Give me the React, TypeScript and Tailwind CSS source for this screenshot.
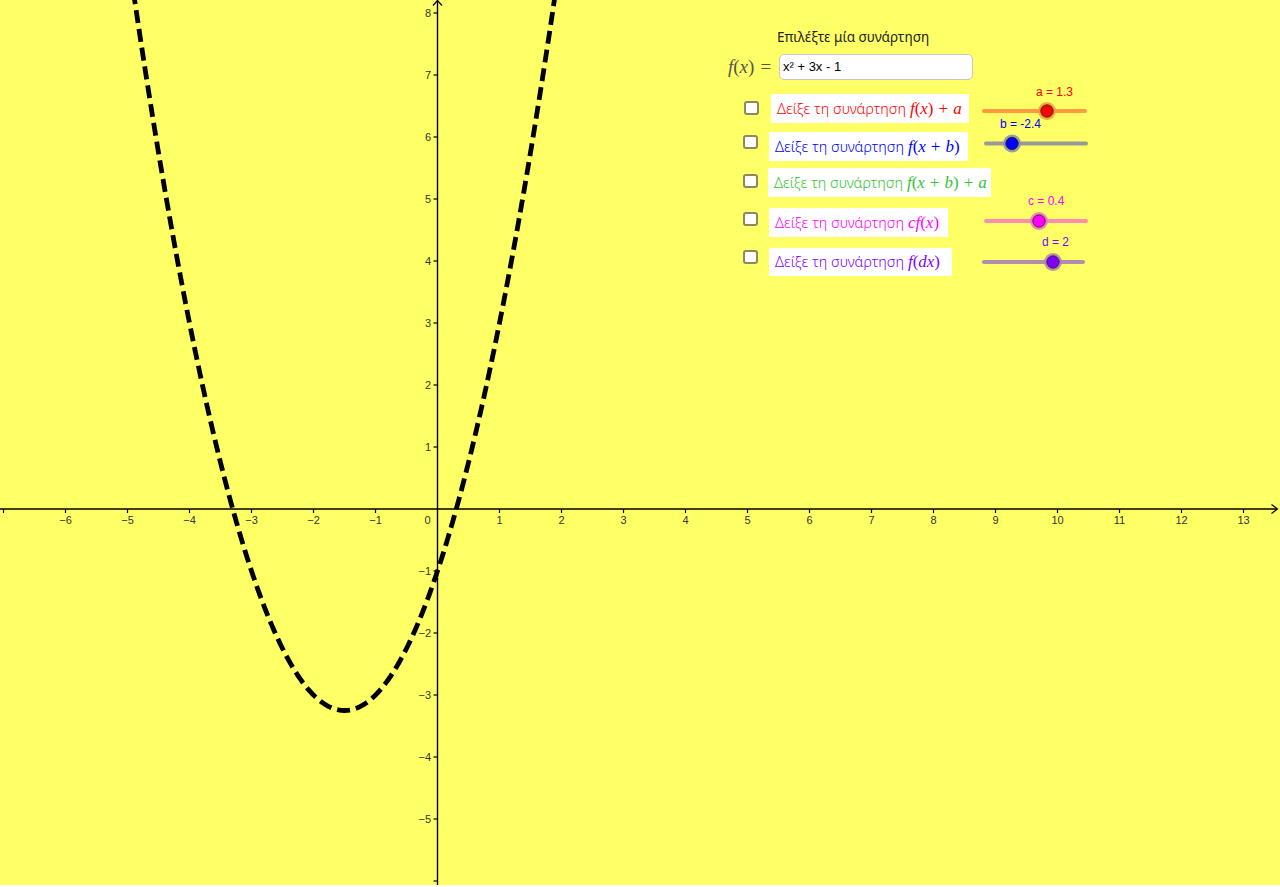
import React from "react";

const X0 = 437.5;
const Y0 = 509;
const U = 62;

function px(x: number) {
  return X0 + U * x;
}
function py(y: number) {
  return Y0 - U * y;
}

function curvePath() {
  const pts: string[] = [];
  for (let x = -4.95; x <= 1.96; x += 0.01) {
    const y = x * x + 3 * x - 1;
    pts.push(`${px(x).toFixed(2)},${py(y).toFixed(2)}`);
  }
  return "M" + pts.join(" L");
}

function fmt(n: number) {
  return n < 0 ? `\u2212${-n}` : `${n}`;
}

type Slider = {
  x1: number;
  x2: number;
  y: number;
  knob: number;
  line: string;
  halo: string;
  fill: string;
  label: string;
  lx: number;
  ly: number;
};

const sliders: Slider[] = [
  { x1: 984, x2: 1085, y: 111, knob: 1047, line: "#ff9a40", halo: "#f29a3c", fill: "#ff0000", label: "a = 1.3", lx: 1036, ly: 96 },
  { x1: 986, x2: 1086, y: 143.5, knob: 1012, line: "#999999", halo: "#8a8ab0", fill: "#0000ff", label: "b = -2.4", lx: 1000, ly: 128 },
  { x1: 986, x2: 1086, y: 221, knob: 1039, line: "#ff8cb4", halo: "#e877c4", fill: "#ff00ff", label: "c = 0.4", lx: 1028, ly: 205 },
  { x1: 984, x2: 1083, y: 262, knob: 1053, line: "#b38cb0", halo: "#b37fb3", fill: "#8000ff", label: "d = 2", lx: 1042, ly: 246 },
];

function I({ children }: { children: React.ReactNode }) {
  return <span className="italic">{children}</span>;
}

type Row = {
  cb: [number, number];
  box: [number, number, number, number];
  color: string;
  math: React.ReactNode;
};

const rows: Row[] = [
  {
    cb: [744, 101],
    box: [771, 94, 198, 29],
    color: "text-[#ff0000]",
    math: (
      <>
        <I>f</I>(<I>x</I>)<span className="mx-[5px]">+</span><I>a</I>
      </>
    ),
  },
  {
    cb: [743, 135],
    box: [769, 132, 199, 29],
    color: "text-[#0000ff]",
    math: (
      <>
        <I>f</I>(<I>x</I>
        <span className="mx-[5px]">+</span>
        <I>b</I>)
      </>
    ),
  },
  {
    cb: [743, 174],
    box: [768, 168, 223, 29],
    color: "text-[#33c433]",
    math: (
      <>
        <I>f</I>(<I>x</I>
        <span className="mx-[5px]">+</span>
        <I>b</I>)<span className="mx-[5px]">+</span>
        <I>a</I>
      </>
    ),
  },
  {
    cb: [743, 212],
    box: [769, 208, 179, 29],
    color: "text-[#ff00ff]",
    math: (
      <>
        <I>cf</I>(<I>x</I>)
      </>
    ),
  },
  {
    cb: [743, 250],
    box: [769, 248, 183, 28],
    color: "text-[#8000ff]",
    math: (
      <>
        <I>f</I>(<I>dx</I>)
      </>
    ),
  },
];

export default function App() {
  const xs: number[] = [];
  for (let i = -7; i <= 13; i++) if (i !== 0) xs.push(i);
  const ys: number[] = [];
  for (let j = -6; j <= 8; j++) if (j !== 0) ys.push(j);

  return (
    <div className="w-[1280px] h-[887px] bg-white">
      <div className="relative w-[1280px] h-[885px] overflow-hidden bg-[#ffff66]">
        <svg width="1280" height="885" className="absolute left-0 top-0" xmlns="http://www.w3.org/2000/svg">
          {/* axes */}
          <line x1={0} y1={Y0} x2={1277} y2={Y0} stroke="#000" strokeWidth={1.4} />
          <polyline points={`1271.5,504.5 1277.5,509 1271.5,513.5`} fill="none" stroke="#000" strokeWidth={1.2} />
          <line x1={X0} y1={0.5} x2={X0} y2={885} stroke="#000" strokeWidth={1.4} />
          <polyline points={`433,5.5 437.5,0.5 442,5.5`} fill="none" stroke="#000" strokeWidth={1.2} />
          {xs.map((i) => (
            <g key={"x" + i}>
              <line x1={px(i)} y1={Y0} x2={px(i)} y2={Y0 + 4} stroke="#000" strokeWidth={1.2} />
              {i > -7 && (
                <text
                  x={px(i)}
                  y={524}
                  textAnchor="middle"
                  fontFamily="'Liberation Sans', Arial, sans-serif"
                  fontSize={11}
                  fill="#333"
                >
                  {fmt(i)}
                </text>
              )}
            </g>
          ))}
          <text x={427.5} y={524} textAnchor="middle" fontFamily="'Liberation Sans', Arial, sans-serif" fontSize={11} fill="#333">
            0
          </text>
          {ys.map((j) => (
            <g key={"y" + j}>
              <line x1={X0 - 4} y1={py(j)} x2={X0} y2={py(j)} stroke="#000" strokeWidth={1.2} />
              {j > -6 && (
                <text
                  x={431}
                  y={py(j) + 4}
                  textAnchor="end"
                  fontFamily="'Liberation Sans', Arial, sans-serif"
                  fontSize={11}
                  fill="#333"
                >
                  {fmt(j)}
                </text>
              )}
            </g>
          ))}
          {/* curve */}
          <path d={curvePath()} fill="none" stroke="#000" strokeWidth={4.8} strokeDasharray="13 6" />
          {/* sliders */}
          {sliders.map((s) => (
            <g key={s.label}>
              <line x1={s.x1} y1={s.y} x2={s.x2} y2={s.y} stroke={s.line} strokeWidth={4} strokeLinecap="round" />
              <circle cx={s.knob} cy={s.y} r={9} fill={s.halo} opacity={0.85} />
              <circle cx={s.knob} cy={s.y} r={6.2} fill={s.fill} stroke="#222" strokeWidth={0.8} />
              <text
                x={s.lx}
                y={s.ly}
                fontFamily="'Liberation Sans', Arial, sans-serif"
                fontSize={12}
                fill={s.fill}
              >
                {s.label}
              </text>
            </g>
          ))}
        </svg>

        {/* title */}
        <div className="absolute left-[777px] top-[28px] text-[13.5px] leading-[18px] text-[#222] font-['Noto_Sans',sans-serif]">
          Επιλέξτε μία συνάρτηση
        </div>

        {/* input */}
        <div className="absolute left-[728px] top-[54px] h-[26px] flex items-center text-[19px] text-[#555] font-['Liberation_Serif',serif]">
          <I>f</I>(<I>x</I>)<span className="ml-[6px]">=</span>
        </div>
        <div className="absolute left-[779px] top-[54px] w-[194px] h-[26px] rounded-[5px] border border-[#c6c6c6] bg-white flex items-center pl-[3px] text-[13px] text-black font-['Liberation_Sans',Arial,sans-serif]">
          x² + 3x - 1
        </div>

        {/* rows */}
        {rows.map((r, idx) => (
          <React.Fragment key={idx}>
            <div
              className="absolute w-[15px] h-[14px] rounded-[3px] border-2 border-[#8a8a5e] bg-white"
              style={{ left: r.cb[0], top: r.cb[1] }}
            />
            <div
              className={`absolute bg-white flex items-center pl-[6px] whitespace-nowrap ${r.color}`}
              style={{ left: r.box[0], top: r.box[1], width: r.box[2], height: r.box[3] }}
            >
              <span className="text-[14.5px] font-['Noto_Sans',sans-serif] font-light">Δείξε τη συνάρτηση</span>
              <span className="ml-[4px] text-[17px] font-['Liberation_Serif',serif]">{r.math}</span>
            </div>
          </React.Fragment>
        ))}
      </div>
    </div>
  );
}
